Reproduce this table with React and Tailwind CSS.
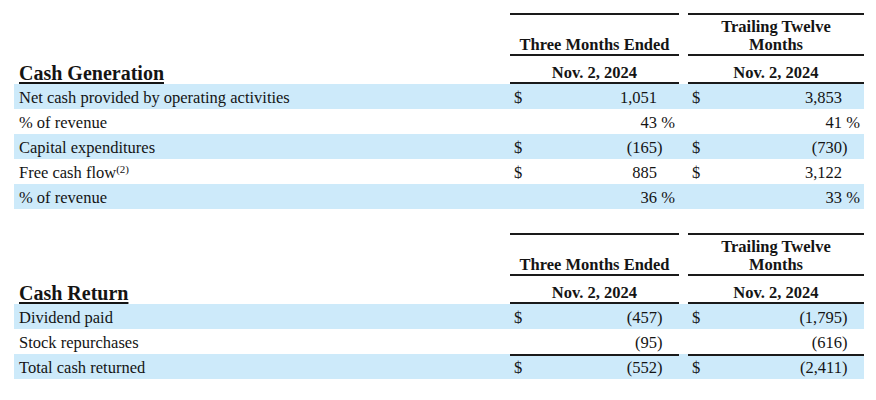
import React from "react";

const serif = { fontFamily: '"Liberation Serif", "Times New Roman", serif' };

const genRows = [
  { label: "Net cash provided by operating activities", a: ["$", "1,051", ""], b: ["$", "3,853", ""], shade: true },
  { label: "% of revenue", a: ["", "43", "\u00a0%"], b: ["", "41", "\u00a0%"] },
  { label: "Capital expenditures", a: ["$", "(165", ")"], b: ["$", "(730", ")"], shade: true },
  { label: "Free cash flow", sup: "(2)", a: ["$", "885", ""], b: ["$", "3,122", ""] },
  { label: "% of revenue", a: ["", "36", "\u00a0%"], b: ["", "33", "\u00a0%"], shade: true },
];

const returnRows = [
  { label: "Dividend paid", a: ["$", "(457", ")"], b: ["$", "(1,795", ")"], shade: true },
  { label: "Stock repurchases", a: ["", "(95", ")"], b: ["", "(616", ")"] },
  { label: "Total cash returned", a: ["$", "(552", ")"], b: ["$", "(2,411", ")"], shade: true, total: true },
];

const ValueCell = ({ width, value, total }) => {
  const [cur, num, suffix] = value;
  return (
    <div className={`${width} flex h-[25px] ${total ? "border-t-2 border-[#1a1a1a] pt-[3px]" : "pt-[5px]"} pl-[4px] leading-[18px]`}>
      <span className="w-[12px]">{cur}</span>
      <span className="flex-1 text-right">{num}</span>
      <span className="w-[22px] whitespace-pre">{suffix}</span>
    </div>
  );
};

const Section = ({ title, rows }) => {
  return (
    <div className="w-[850px]">
      {/* Column headers */}
      <div className="flex">
        <div className="w-[496px]" />
        <div className="flex h-[43px] w-[169px] items-end justify-center border-y-2 border-[#1a1a1a] text-center font-bold leading-[18px]">
          Three Months Ended
        </div>
        <div className="w-[9px]" />
        <div className="flex h-[43px] w-[176px] flex-col items-center justify-end border-y-2 border-[#1a1a1a] text-center font-bold leading-[18px]">
          <span>Trailing Twelve</span>
          <span>Months</span>
        </div>
      </div>

      <div className="flex">
        <div className="flex h-[28px] w-[496px] items-end pl-[5px]">
          <span className="pb-[1px] text-[20px] font-bold leading-[20px] underline underline-offset-[2px]">{title}</span>
        </div>
        <div className="flex h-[28px] w-[169px] items-end justify-center border-b-2 border-[#1a1a1a] font-bold leading-[18px]">
          Nov. 2, 2024
        </div>
        <div className="w-[9px]" />
        <div className="flex h-[28px] w-[176px] items-end justify-center border-b-2 border-[#1a1a1a] font-bold leading-[18px]">
          Nov. 2, 2024
        </div>
      </div>

      {/* Rows */}
      {rows.map((r, i) => (
        <div key={i} className={`flex ${r.shade ? "bg-[#cdeafa]" : ""}`}>
          <div className="h-[25px] w-[496px] pl-[5px] pt-[5px] leading-[18px]">
            {r.label}
            {r.sup && <sup className="text-[11px]">{r.sup}</sup>}
          </div>
          <ValueCell width="w-[169px]" value={r.a} total={r.total} />
          <div className="w-[9px]" />
          <ValueCell width="w-[176px]" value={r.b} total={r.total} />
        </div>
      ))}
    </div>
  );
};

export default function App() {
  return (
    <div className="h-[400px] w-[876px] bg-white pl-[14px] pt-[13px] text-[16.5px] text-[#141414]" style={serif}>
      <Section title="Cash Generation" rows={genRows} />
      <div className="h-[24px]" />
      <Section title="Cash Return" rows={returnRows} />
    </div>
  );
}
